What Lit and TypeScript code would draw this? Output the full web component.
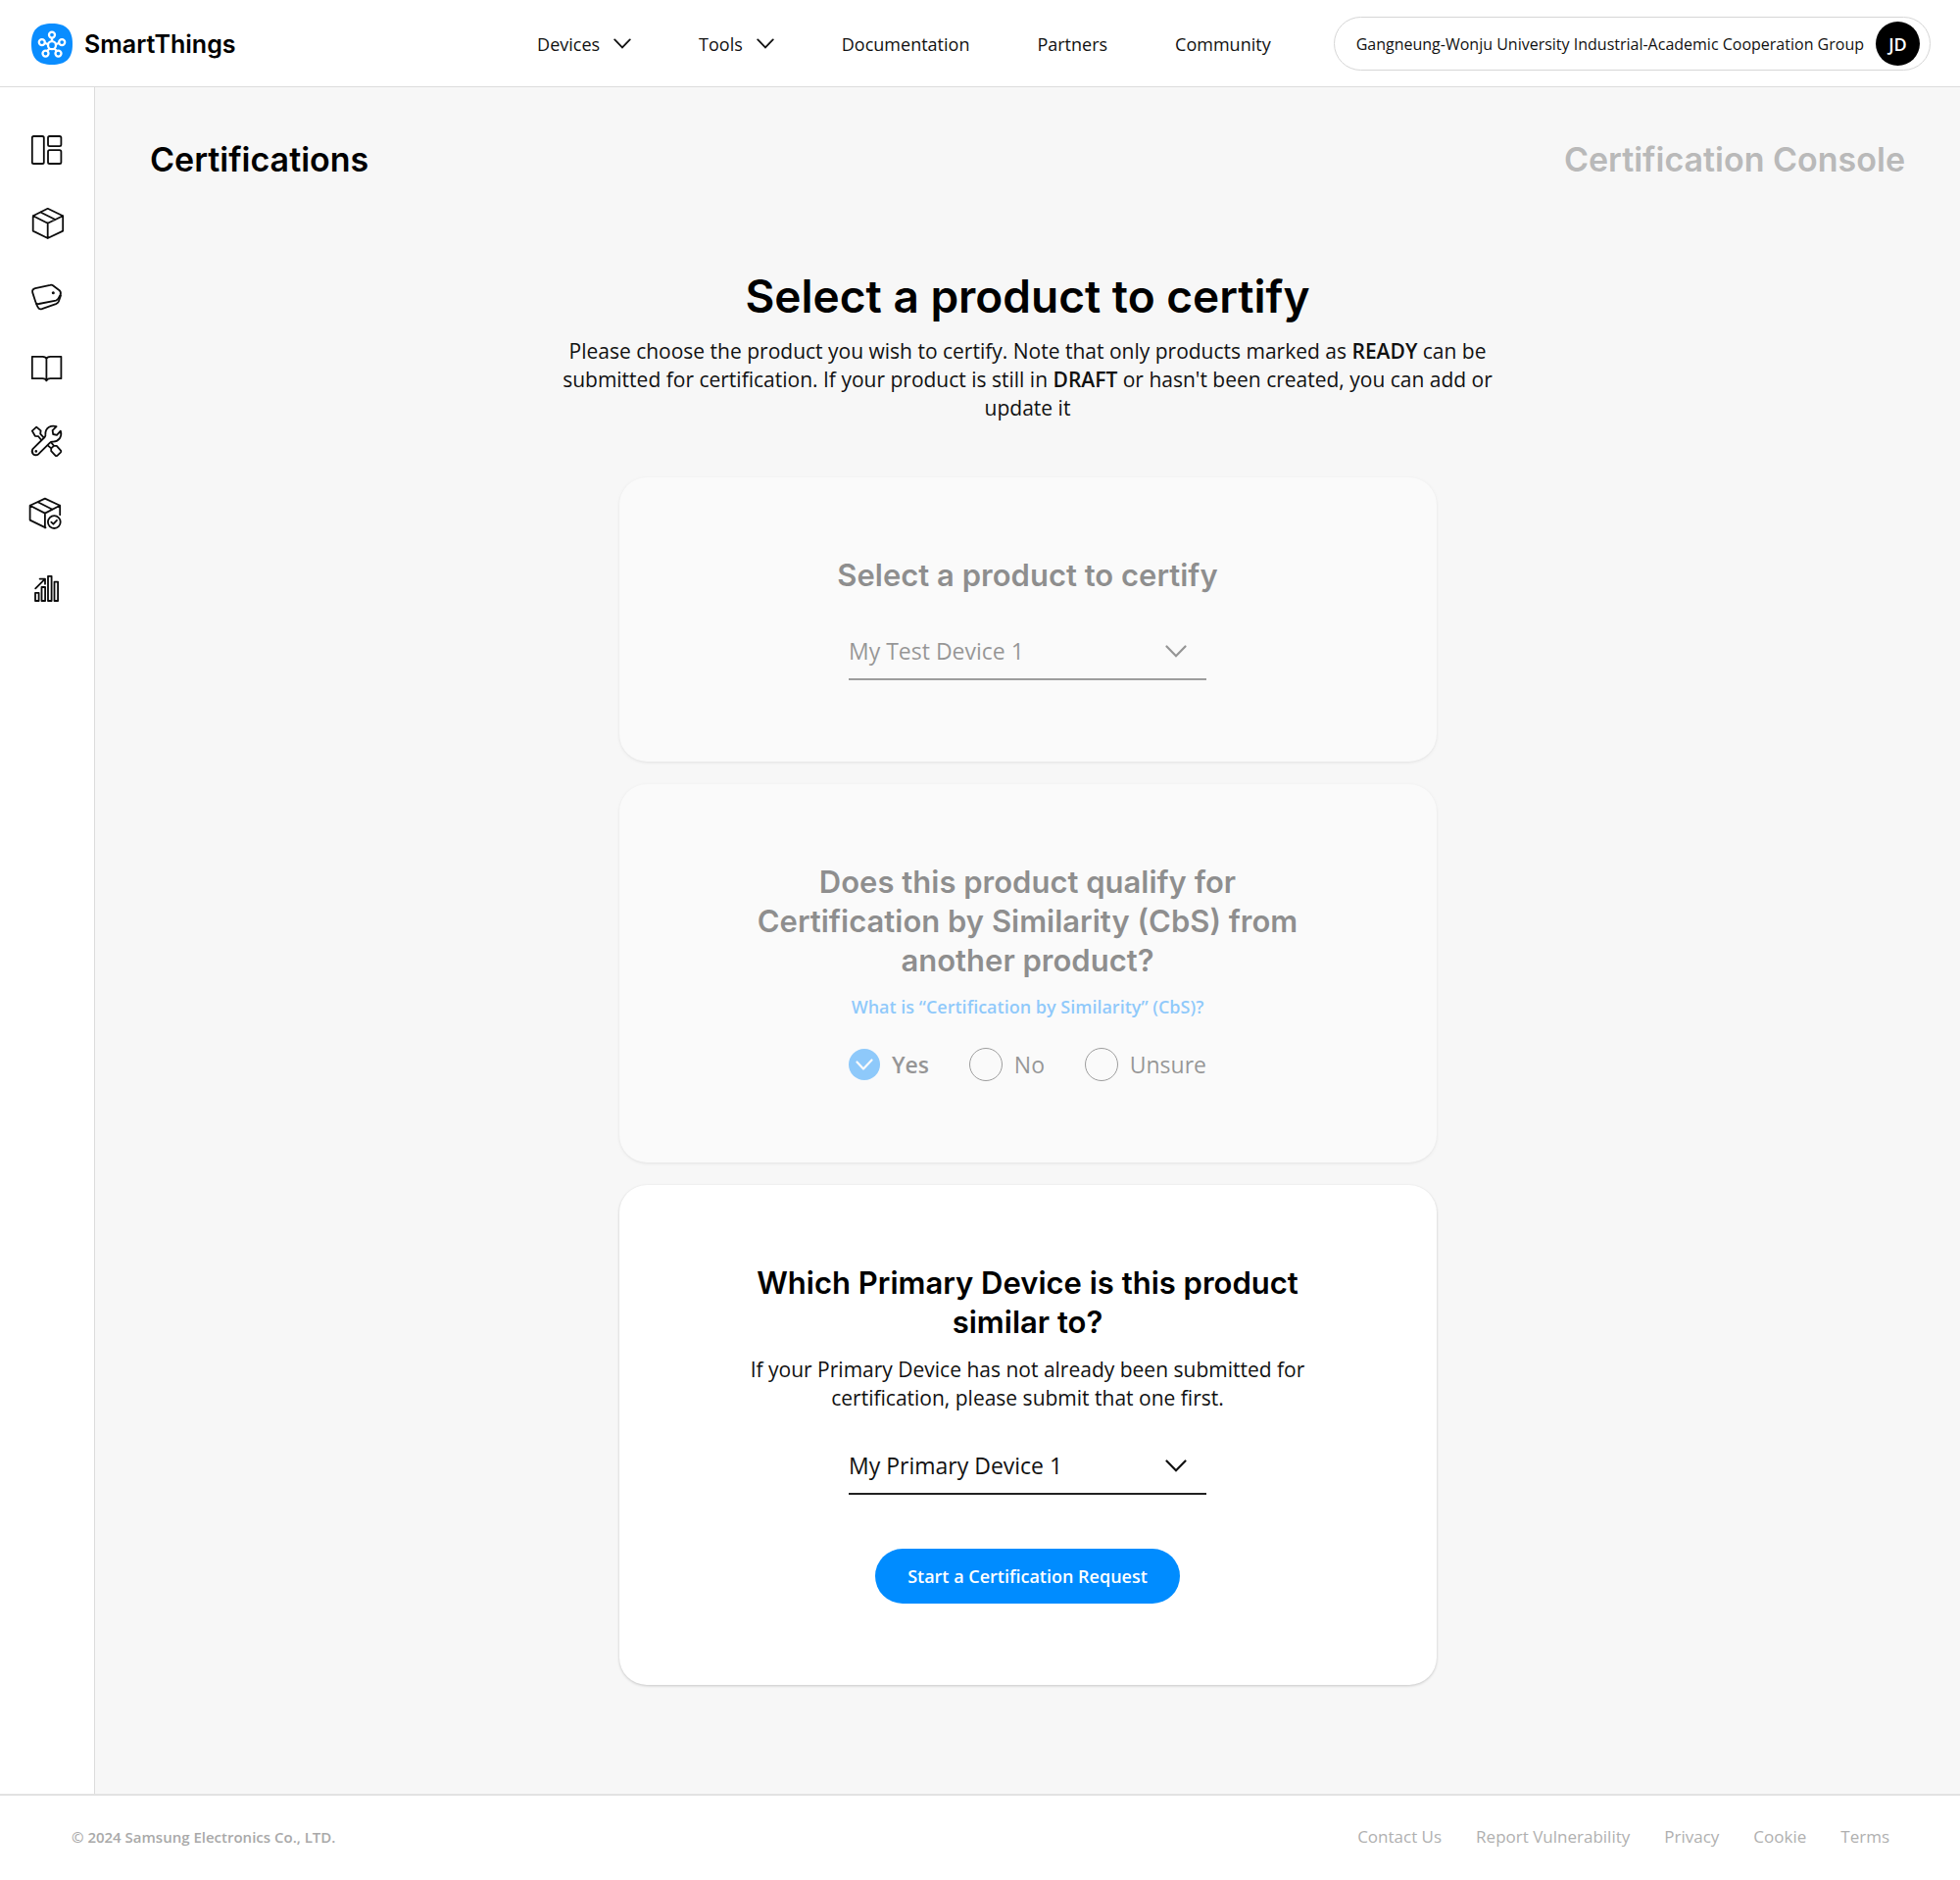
import { LitElement, html, css, svg, nothing } from "lit";
import type { SVGTemplateResult } from "lit";
import { customElement, property, state } from "lit/decorators.js";

const chevron = (cls: string) => html`
  <svg class=${cls} viewBox="0 0 22 13" aria-hidden="true">
    <path d="M1.5 1.5 11 11.2 20.5 1.5" fill="none" stroke="currentColor" stroke-width="2.2" stroke-linecap="round" />
  </svg>
`;

interface SideItem {
  label: string;
  icon: SVGTemplateResult;
}

const SIDE_ITEMS: SideItem[] = [
  {
    label: "Dashboard",
    icon: svg`
      <rect x="4.8" y="6" width="12" height="28" rx="1.6" />
      <rect x="21" y="6" width="13.4" height="10.2" rx="1.6" />
      <rect x="21" y="20.2" width="13.4" height="13.8" rx="1.6" />`,
  },
  {
    label: "Products",
    icon: svg`<path d="M20.7 5.8 36.2 13.2V28.6L20.7 36 5.7 28.6V13.2ZM5.7 13.2 20.7 20.7 36.2 13.2M20.7 20.7V36M13.3 9.5 28.4 17" />`,
  },
  {
    label: "Branding",
    icon: svg`
      <path d="M8 13.2 23.2 9.8Q24.8 9.4 26 10.3L32.6 15.2Q34.6 17.2 33.6 19.6L31.6 23.4Q30.8 25 29 25.6L11.6 29Q9.2 29.4 8.4 27.2L5.2 17.4Q4.4 14.2 8 13.2Z" />
      <path d="M8.8 28.6 10.8 32.6Q12 35 14.8 34.2L29 29.2Q31 28.4 31.8 26.6L34 20.4" />
      <circle cx="26.3" cy="17.8" r="1.5" fill="currentColor" stroke="none" />`,
  },
  {
    label: "Guides",
    icon: svg`<path d="M4.8 8.8H15.4Q18.8 8.8 19.4 11 20 8.8 23.4 8.8H34.4V31.2H23.4Q20 31.2 19.4 33.4 18.8 31.2 15.4 31.2H4.8ZM19.4 11V33.4" />`,
  },
  {
    label: "Tools",
    icon: svg`
      <path d="M5.6 28.8 17.6 17Q18.6 15.8 18.4 14.4 18 9.4 22 6.8 25.4 4.8 29.6 6.2L25.6 10.2 26.2 14 30 14.8 33.8 10.6Q35.2 14.8 32.8 18.4 30 22 25.4 21.6 24 21.6 23 22.6L11.4 34.2Q8.4 36.4 5.8 34.2 3.6 31.6 5.6 28.8Z" />
      <circle cx="8.8" cy="31.4" r="1.3" fill="currentColor" stroke="none" />
      <path d="M16.6 17.4 13.2 13.6 13.6 10.4 9.2 6.6 4.8 10.6 7.8 15.8 11.2 16.2 14 19.8" />
      <path d="M24.4 22.6 27 25.8 29.8 25.8 34.2 30.8Q34.6 31.8 33.8 32.6L30.4 35.8Q29.4 36.6 28.4 35.6L24.2 31.2 24.2 28.4 21 25.6M27 25.8 24.2 28.4" />`,
  },
  {
    label: "Certifications",
    icon: svg`
      <path d="M18.5 35.4 2.6 27.6V12.8L17.9 5.6 33.2 12.8V22.2M2.6 12.8 17.9 20.6 33.2 12.8M17.9 20.6V35.4M10.7 9.2 25.5 16.8" />
      <circle cx="27.3" cy="29.6" r="6.4" />
      <path d="M24.3 29.6 26.4 31.7 30 27.8" />`,
  },
  {
    label: "Analytics",
    icon: svg`
      <rect x="8" y="27.8" width="3.6" height="8.2" />
      <rect x="14.5" y="22" width="3.6" height="14" />
      <rect x="21" y="10.8" width="3.6" height="25.2" />
      <rect x="27.5" y="16.6" width="3.6" height="19.4" />
      <path d="M8.2 23.4 18 13.6M12.6 13.6H18V18.8" />`,
  },
];

const NAV = [
  { label: "Devices", menu: true },
  { label: "Tools", menu: true },
  { label: "Documentation", menu: false },
  { label: "Partners", menu: false },
  { label: "Community", menu: false },
];

const FOOTER_LINKS = ["Contact Us", "Report Vulnerability", "Privacy", "Cookie", "Terms"];

@customElement("st-header")
export class StHeader extends LitElement {
  static styles = css`
    :host {
      display: block;
      border-bottom: 1px solid #dcdcdc;
      background: #fff;
    }
    .bar {
      display: flex;
      align-items: center;
      min-height: 88px;
      padding: 1px 30px 0 32px;
      box-sizing: border-box;
    }
    .brand {
      display: flex;
      align-items: center;
      gap: 12px;
      font: 600 25px/32px Inter, sans-serif;
      color: #000;
      text-decoration: none;
    }
    .logo {
      width: 42px;
      height: 42px;
    }
    .nav {
      display: flex;
      align-items: center;
      gap: 69px;
      margin-left: auto;
      margin-right: 64px;
    }
    .item {
      display: flex;
      align-items: center;
      gap: 14px;
      padding: 0;
      border: 0;
      background: none;
      font: 400 18px/28px "Open Sans", sans-serif;
      color: #111;
      text-decoration: none;
    }
    .chev {
      width: 18px;
      height: 11px;
    }
    .account {
      display: flex;
      align-items: center;
      gap: 12px;
      height: 55px;
      box-sizing: border-box;
      padding: 0 10px 0 22px;
      border: 1px solid #d6d6d6;
      border-radius: 28px;
      background: #fff;
      font: 400 16px/24px "Open Sans", sans-serif;
      color: #111;
      white-space: nowrap;
    }
    .avatar {
      display: grid;
      place-items: center;
      width: 45px;
      height: 45px;
      border-radius: 50%;
      background: #000;
      color: #fff;
      font-weight: 600;
      font-size: 18px;
    }
  `;

  render() {
    return html`
      <header class="bar">
        <a class="brand" href="#home">
          <svg class="logo" viewBox="0 0 42 42" aria-hidden="true">
            <path
              d="M21 0C35 0 42 6 42 21S35 42 21 42 0 36 0 21 7 0 21 0Z"
              fill="#0a8dff"
            />
            <g fill="none" stroke="#fff" stroke-width="2.3">
              <path d="M21 14.6V18.2M13.8 20 17.2 21.2M28.2 20 24.8 21.2M16.2 28 18.8 25.2M25.8 28 23.2 25.2" />
              <circle cx="21" cy="22.2" r="4" />
              <circle cx="21" cy="11.6" r="3" />
              <circle cx="10.8" cy="19.1" r="3" />
              <circle cx="31.2" cy="19.1" r="3" />
              <circle cx="14.5" cy="30.6" r="3" />
              <circle cx="27.5" cy="30.6" r="3" />
            </g>
          </svg>
          SmartThings
        </a>
        <nav class="nav" aria-label="Main">
          ${NAV.map((n) =>
            n.menu
              ? html`<button class="item" type="button" aria-haspopup="true">${n.label} ${chevron("chev")}</button>`
              : html`<a class="item" href="#${n.label.toLowerCase()}">${n.label}</a>`
          )}
        </nav>
        <button class="account" type="button">
          Gangneung-Wonju University Industrial-Academic Cooperation Group
          <span class="avatar">JD</span>
        </button>
      </header>
    `;
  }
}

@customElement("st-sidebar")
export class StSidebar extends LitElement {
  static styles = css`
    :host {
      display: block;
      border-right: 1px solid #dcdcdc;
      background: #fff;
    }
    .list {
      display: flex;
      flex-direction: column;
      gap: 34px;
      padding: 44px 28px;
    }
    .link {
      display: block;
      height: 40px;
      color: #0c0c0c;
    }
    .icon {
      display: block;
      width: 40px;
      height: 40px;
      fill: none;
      stroke: currentColor;
      stroke-width: 1.8;
      stroke-linecap: round;
      stroke-linejoin: round;
    }
  `;

  render() {
    return html`
      <nav class="list" aria-label="Console">
        ${SIDE_ITEMS.map(
          (i) => html`<a class="link" href="#${i.label.toLowerCase()}" aria-label=${i.label}>
            <svg class="icon" viewBox="0 0 40 40" aria-hidden="true">${i.icon}</svg>
          </a>`
        )}
      </nav>
    `;
  }
}

@customElement("st-dropdown")
export class StDropdown extends LitElement {
  @property() label = "";
  @property({ type: Array }) options: string[] = [];

  static styles = css`
    :host {
      display: block;
      width: 365px;
      max-width: 100%;
    }
    .field {
      display: grid;
      align-items: center;
      height: 58px;
      box-sizing: border-box;
      border-bottom: 2px solid #222;
      color: #111;
    }
    .select,
    .chev {
      grid-area: 1 / 1;
    }
    .select {
      width: 100%;
      height: 100%;
      padding: 0 48px 0 0;
      border: 0;
      background: none;
      appearance: none;
      font: 400 23px/32px "Open Sans", sans-serif;
      color: inherit;
    }
    .chev {
      justify-self: end;
      width: 22px;
      height: 13px;
      margin-right: 20px;
      pointer-events: none;
    }
  `;

  render() {
    return html`
      <div class="field">
        <select class="select" aria-label=${this.label}>
          ${this.options.map((o) => html`<option>${o}</option>`)}
        </select>
        ${chevron("chev")}
      </div>
    `;
  }
}

@customElement("st-card")
export class StCard extends LitElement {
  @property() heading = "";
  @property() note = "";
  @property({ type: Boolean, reflect: true }) muted = false;

  static styles = css`
    :host {
      display: block;
      border-radius: 28px;
      background: #fff;
      box-shadow: 0 1px 3px rgba(0, 0, 0, 0.2);
    }
    :host([muted]) {
      opacity: 0.42;
    }
    .body {
      display: flex;
      flex-direction: column;
      align-items: center;
      padding: 80px 24px 83px;
      text-align: center;
    }
    .heading {
      max-width: 580px;
      margin: 0;
      font: 600 31px/40px Inter, sans-serif;
      color: #000;
    }
    .note {
      max-width: 580px;
      margin: 14px 0 0;
      font: 400 21px/29px "Open Sans", sans-serif;
      color: #111;
    }
  `;

  render() {
    return html`
      <section class="body">
        <h2 class="heading">${this.heading}</h2>
        ${this.note ? html`<p class="note">${this.note}</p>` : nothing}
        <slot></slot>
      </section>
    `;
  }
}

@customElement("app-root")
export class AppRoot extends LitElement {
  @state() private answer = "Yes";

  static styles = css`
    :host {
      display: flex;
      flex-direction: column;
      min-height: 100vh;
      background: #fff;
      font-family: "Open Sans", sans-serif;
    }
    .page {
      display: grid;
      grid-template-columns: auto 1fr;
      flex: 1;
    }
    .main {
      padding: 52px 56px 104px;
      background: #f7f7f7;
    }
    .top {
      display: flex;
      justify-content: space-between;
      font: 600 34px/44px Inter, sans-serif;
    }
    .title {
      margin: 0;
      font: inherit;
      color: #000;
    }
    .console {
      color: #b9b9b9;
    }
    .intro {
      max-width: 950px;
      margin: 87px auto 56px;
      text-align: center;
    }
    .lead {
      margin: 0 0 12px;
      font: 600 46px/60px Inter, sans-serif;
      color: #000;
    }
    .text {
      margin: 0;
      font: 400 21px/29px "Open Sans", sans-serif;
      color: #111;
    }
    .text b {
      font-weight: 600;
    }
    .cards {
      display: flex;
      flex-direction: column;
      gap: 23px;
      max-width: 834px;
      margin: 0 auto;
    }
    .product {
      margin-top: 29px;
    }
    .primary {
      margin-top: 26px;
    }
    .help {
      margin-top: 13px;
      font: 600 18px/29px "Open Sans", sans-serif;
      color: #008cff;
      text-decoration: none;
    }
    .answers {
      display: flex;
      justify-content: space-between;
      width: 365px;
      max-width: 100%;
      margin: 27px 0 0;
      padding: 0;
      border: 0;
    }
    .answer {
      display: flex;
      align-items: center;
      gap: 12px;
      height: 34px;
      font: 400 23px/34px "Open Sans", sans-serif;
      color: #111;
    }
    .answer.on {
      font-weight: 600;
    }
    .mark {
      display: grid;
      place-items: center;
    }
    .radio,
    .tick {
      grid-area: 1 / 1;
    }
    .radio {
      appearance: none;
      width: 34px;
      height: 34px;
      margin: 0;
      border: 1px solid #222;
      border-radius: 50%;
    }
    .radio:checked {
      width: 32px;
      height: 32px;
      border: 0;
      background: #008cff;
    }
    .tick {
      width: 18px;
      height: 13px;
      pointer-events: none;
    }
    .start {
      height: 56px;
      margin-top: 55px;
      padding: 0 33px;
      border: 0;
      border-radius: 28px;
      background: #008cff;
      font: 600 18px/28px "Open Sans", sans-serif;
      color: #fff;
    }
    .footer {
      display: flex;
      align-items: center;
      justify-content: space-between;
      min-height: 88px;
      box-sizing: border-box;
      padding: 0 72px 2px 73px;
      border-top: 2px solid #e2e2e2;
      color: #a9a9a9;
    }
    .copy {
      font: 600 15px/24px "Open Sans", sans-serif;
    }
    .links {
      display: flex;
      gap: 35px;
      font: 400 17px/24px "Open Sans", sans-serif;
    }
    .links a {
      color: #b0b0b0;
      text-decoration: none;
    }
  `;

  private renderAnswer(value: string) {
    const on = this.answer === value;
    return html`
      <label class="answer ${on ? "on" : ""}">
        <span class="mark">
          <input
            class="radio"
            type="radio"
            name="cbs"
            value=${value}
            .checked=${on}
            @change=${() => (this.answer = value)}
          />
          ${on
            ? html`<svg class="tick" viewBox="0 0 18 13" aria-hidden="true">
                <path d="M1.5 3.5 8 10.5 16.5 1.5" fill="none" stroke="#fff" stroke-width="2.2" stroke-linecap="round" stroke-linejoin="round" />
              </svg>`
            : nothing}
        </span>
        ${value}
      </label>
    `;
  }

  render() {
    return html`
      <st-header></st-header>
      <div class="page">
        <st-sidebar></st-sidebar>
        <main class="main">
          <div class="top">
            <h1 class="title">Certifications</h1>
            <span class="console">Certification Console</span>
          </div>
          <div class="intro">
            <h2 class="lead">Select a product to certify</h2>
            <p class="text">
              Please choose the product you wish to certify. Note that only products marked as
              <b>READY</b> can be submitted for certification. If your product is still in
              <b>DRAFT</b> or hasn't been created, you can add or update it
            </p>
          </div>
          <div class="cards">
            <st-card muted heading="Select a product to certify">
              <st-dropdown class="product" label="Product" .options=${["My Test Device 1"]}></st-dropdown>
            </st-card>
            <st-card
              muted
              heading="Does this product qualify for Certification by Similarity (CbS) from another product?"
            >
              <a class="help" href="#cbs">What is “Certification by Similarity” (CbS)?</a>
              <fieldset class="answers" aria-label="Qualifies for Certification by Similarity">
                ${["Yes", "No", "Unsure"].map((v) => this.renderAnswer(v))}
              </fieldset>
            </st-card>
            <st-card
              heading="Which Primary Device is this product similar to?"
              note="If your Primary Device has not already been submitted for certification, please submit that one first."
            >
              <st-dropdown class="primary" label="Primary device" .options=${["My Primary Device 1"]}></st-dropdown>
              <button class="start" type="button">Start a Certification Request</button>
            </st-card>
          </div>
        </main>
      </div>
      <footer class="footer">
        <span class="copy">© 2024 Samsung Electronics Co., LTD.</span>
        <nav class="links" aria-label="Footer">
          ${FOOTER_LINKS.map((l) => html`<a href="#${l.toLowerCase().replace(/ /g, "-")}">${l}</a>`)}
        </nav>
      </footer>
    `;
  }
}
